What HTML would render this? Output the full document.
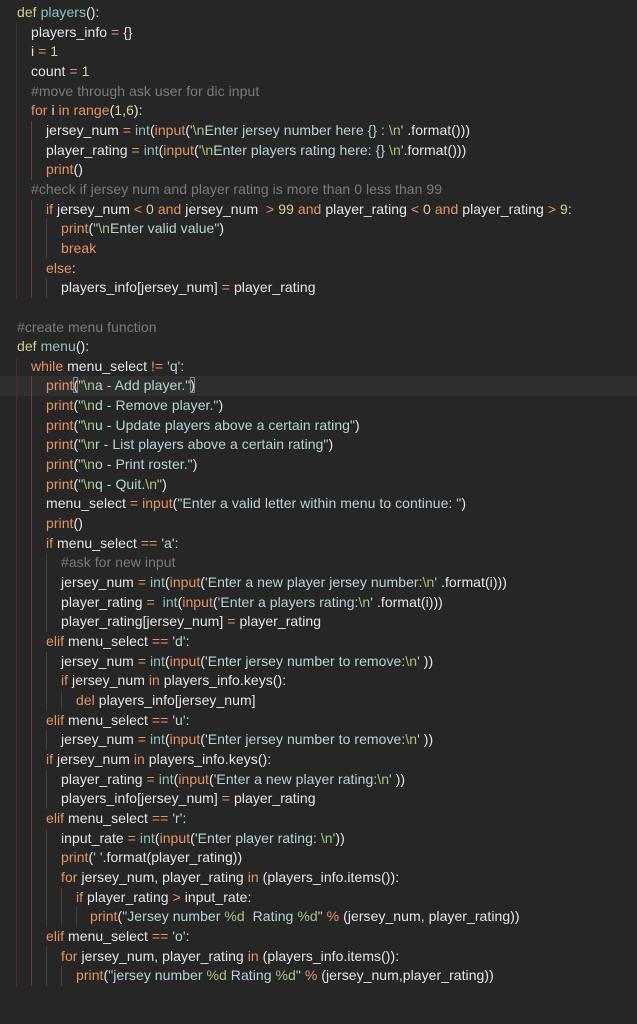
<!DOCTYPE html>
<html><head><meta charset="utf-8"><style>
html,body{margin:0;padding:0;background:#262626;width:637px;height:1024px;overflow:hidden}
#c{position:absolute;top:3px;left:0;width:637px;font-family:"Liberation Sans",sans-serif;font-size:14px;letter-spacing:0.05px;color:#e6e6e6}
.l{height:19.67px;line-height:19.67px;white-space:pre;background-repeat:no-repeat}
.L0{padding-left:17px}
.L1{padding-left:31px;background-image:linear-gradient(#3e3330,#3e3330);background-position:16px 0;background-size:1px 100%}
.L2{padding-left:46px;background-image:linear-gradient(#3e3330,#3e3330),linear-gradient(#6a4630,#6a4630);background-position:16px 0,31px 0;background-size:1px 100%,1px 100%}
.L3{padding-left:61px;background-image:linear-gradient(#3e3330,#3e3330),linear-gradient(#6a4630,#6a4630),linear-gradient(#4a3c33,#4a3c33);background-position:16px 0,31px 0,46px 0;background-size:1px 100%,1px 100%,1px 100%}
.L4{padding-left:76px;background-image:linear-gradient(#3e3330,#3e3330),linear-gradient(#6a4630,#6a4630),linear-gradient(#4a3c33,#4a3c33),linear-gradient(#4a3c33,#4a3c33);background-position:16px 0,31px 0,46px 0,61px 0;background-size:1px 100%,1px 100%,1px 100%,1px 100%}
.L5{padding-left:90px;background-image:linear-gradient(#3e3330,#3e3330),linear-gradient(#6a4630,#6a4630),linear-gradient(#4a3c33,#4a3c33),linear-gradient(#4a3c33,#4a3c33),linear-gradient(#4a3c33,#4a3c33);background-position:16px 0,31px 0,46px 0,61px 0,76px 0;background-size:1px 100%,1px 100%,1px 100%,1px 100%,1px 100%}
.hl{background-color:#2f2f2f}
.k{color:#e8955c}.d{color:#d8cf87}.f{color:#8cc4c1}.s{color:#b8d3d6}.e{color:#a5c775}.n{color:#d9d08a}.c{color:#7a7a7a}
.b{outline:1px solid #888;outline-offset:-1px}
</style></head><body><div id="c">
<div class="l L0"><span class="d">def</span> <span class="f">players</span>():</div>
<div class="l L1">players_info <span class="k">=</span> {}</div>
<div class="l L1">i <span class="k">=</span> <span class="n">1</span></div>
<div class="l L1">count <span class="k">=</span> <span class="n">1</span></div>
<div class="l L1"><span class="c">#move through ask user for dic input</span></div>
<div class="l L1"><span class="k">for</span> i <span class="k">in</span> <span class="k">range</span>(<span class="n">1</span>,<span class="n">6</span>):</div>
<div class="l L2">jersey_num <span class="k">=</span> <span class="f">int</span>(<span class="k">input</span>(<span class="s">'<span class="e">\n</span>Enter jersey number here {} : <span class="e">\n</span>'</span> .format()))</div>
<div class="l L2">player_rating <span class="k">=</span> <span class="f">int</span>(<span class="k">input</span>(<span class="s">'<span class="e">\n</span>Enter players rating here: {} <span class="e">\n</span>'</span>.format()))</div>
<div class="l L2"><span class="k">print</span>()</div>
<div class="l L1"><span class="c">#check if jersey num and player rating is more than 0 less than 99</span></div>
<div class="l L2"><span class="k">if</span> jersey_num <span class="k">&lt;</span> <span class="n">0</span> <span class="k">and</span> jersey_num  <span class="k">&gt;</span> <span class="n">99</span> <span class="k">and</span> player_rating <span class="k">&lt;</span> <span class="n">0</span> <span class="k">and</span> player_rating <span class="k">&gt;</span> <span class="n">9</span>:</div>
<div class="l L3"><span class="k">print</span>(<span class="s">"<span class="e">\n</span>Enter valid value"</span>)</div>
<div class="l L3"><span class="k">break</span></div>
<div class="l L2"><span class="k">else</span>:</div>
<div class="l L3">players_info[jersey_num] <span class="k">=</span> player_rating</div>
<div class="l L0"> </div>
<div class="l L0"><span class="c">#create menu function</span></div>
<div class="l L0"><span class="d">def</span> <span class="f">menu</span>():</div>
<div class="l L1"><span class="k">while</span> menu_select <span class="k">!=</span> <span class="s">'q'</span>:</div>
<div class="l L2 hl"><span class="k">print</span><span class="b">(</span><span class="s">"<span class="e">\n</span>a - Add player."</span><span class="b">)</span></div>
<div class="l L2"><span class="k">print</span>(<span class="s">"<span class="e">\n</span>d - Remove player."</span>)</div>
<div class="l L2"><span class="k">print</span>(<span class="s">"<span class="e">\n</span>u - Update players above a certain rating"</span>)</div>
<div class="l L2"><span class="k">print</span>(<span class="s">"<span class="e">\n</span>r - List players above a certain rating"</span>)</div>
<div class="l L2"><span class="k">print</span>(<span class="s">"<span class="e">\n</span>o - Print roster."</span>)</div>
<div class="l L2"><span class="k">print</span>(<span class="s">"<span class="e">\n</span>q - Quit.<span class="e">\n</span>"</span>)</div>
<div class="l L2">menu_select <span class="k">=</span> <span class="k">input</span>(<span class="s">"Enter a valid letter within menu to continue: "</span>)</div>
<div class="l L2"><span class="k">print</span>()</div>
<div class="l L2"><span class="k">if</span> menu_select <span class="k">==</span> <span class="s">'a'</span>:</div>
<div class="l L3"><span class="c">#ask for new input</span></div>
<div class="l L3">jersey_num <span class="k">=</span> <span class="f">int</span>(<span class="k">input</span>(<span class="s">'Enter a new player jersey number:<span class="e">\n</span>'</span> .format(i)))</div>
<div class="l L3">player_rating <span class="k">=</span>  <span class="f">int</span>(<span class="k">input</span>(<span class="s">'Enter a players rating:<span class="e">\n</span>'</span> .format(i)))</div>
<div class="l L3">player_rating[jersey_num] <span class="k">=</span> player_rating</div>
<div class="l L2"><span class="k">elif</span> menu_select <span class="k">==</span> <span class="s">'d'</span>:</div>
<div class="l L3">jersey_num <span class="k">=</span> <span class="f">int</span>(<span class="k">input</span>(<span class="s">'Enter jersey number to remove:<span class="e">\n</span>'</span> ))</div>
<div class="l L3"><span class="k">if</span> jersey_num <span class="k">in</span> players_info.keys():</div>
<div class="l L4"><span class="k">del</span> players_info[jersey_num]</div>
<div class="l L2"><span class="k">elif</span> menu_select <span class="k">==</span> <span class="s">'u'</span>:</div>
<div class="l L3">jersey_num <span class="k">=</span> <span class="f">int</span>(<span class="k">input</span>(<span class="s">'Enter jersey number to remove:<span class="e">\n</span>'</span> ))</div>
<div class="l L2"><span class="k">if</span> jersey_num <span class="k">in</span> players_info.keys():</div>
<div class="l L3">player_rating <span class="k">=</span> <span class="f">int</span>(<span class="k">input</span>(<span class="s">'Enter a new player rating:<span class="e">\n</span>'</span> ))</div>
<div class="l L3">players_info[jersey_num] <span class="k">=</span> player_rating</div>
<div class="l L2"><span class="k">elif</span> menu_select <span class="k">==</span> <span class="s">'r'</span>:</div>
<div class="l L3">input_rate <span class="k">=</span> <span class="f">int</span>(<span class="k">input</span>(<span class="s">'Enter player rating: <span class="e">\n</span>'</span>))</div>
<div class="l L3"><span class="k">print</span>(<span class="s">' '</span>.format(player_rating))</div>
<div class="l L3"><span class="k">for</span> jersey_num, player_rating <span class="k">in</span> (players_info.items()):</div>
<div class="l L4"><span class="k">if</span> player_rating <span class="k">&gt;</span> input_rate:</div>
<div class="l L5"><span class="k">print</span>(<span class="s">"Jersey number <span class="e">%d</span>  Rating <span class="e">%d</span>"</span> <span class="k">%</span> (jersey_num, player_rating))</div>
<div class="l L2"><span class="k">elif</span> menu_select <span class="k">==</span> <span class="s">'o'</span>:</div>
<div class="l L3"><span class="k">for</span> jersey_num, player_rating <span class="k">in</span> (players_info.items()):</div>
<div class="l L4"><span class="k">print</span>(<span class="s">"jersey number <span class="e">%d</span> Rating <span class="e">%d</span>"</span> <span class="k">%</span> (jersey_num,player_rating))</div>
</div></body></html>
